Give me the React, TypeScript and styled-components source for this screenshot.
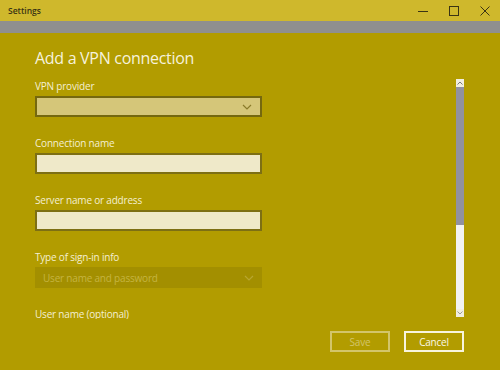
import React from 'react';
import styled, { createGlobalStyle } from 'styled-components';

const GlobalStyle = createGlobalStyle`
  html, body {
    margin: 0;
    padding: 0;
    background: #b29c00;
  }
  body {
    font-family: "Open Sans", "Noto Sans", sans-serif;
  }
`;

const fields = [
  { label: 'VPN provider', kind: 'select' },
  { label: 'Connection name', kind: 'input' },
  { label: 'Server name or address', kind: 'input' },
  { label: 'Type of sign-in info', kind: 'disabled', value: 'User name and password' },
  { label: 'User name (optional)', kind: 'input' },
];

const Chevron = ({ color }: { color: string }) => (
  <svg width="10" height="6" viewBox="0 0 10 6">
    <path d="M1 1 L5 5 L9 1" fill="none" stroke={color} strokeWidth="1.2" />
  </svg>
);

const App = () => {
  return (
    <Window>
      <GlobalStyle />
      <TitleBar>
        <TitleText>Settings</TitleText>
        <Controls>
          <ControlButton>
            <svg width="10" height="10" viewBox="0 0 10 10">
              <path d="M0 5.5 H10" stroke="#3b3414" strokeWidth="1" />
            </svg>
          </ControlButton>
          <ControlButton>
            <svg width="10" height="10" viewBox="0 0 10 10">
              <rect x="0.5" y="0.5" width="9" height="9" fill="none" stroke="#3b3414" strokeWidth="1" />
            </svg>
          </ControlButton>
          <ControlButton>
            <svg width="10" height="10" viewBox="0 0 10 10">
              <path d="M0.5 0.5 L9.5 9.5 M9.5 0.5 L0.5 9.5" stroke="#3b3414" strokeWidth="1" />
            </svg>
          </ControlButton>
        </Controls>
      </TitleBar>
      <GrayBand />

      <Main>
        <Header>
          <Heading>Add a VPN connection</Heading>
        </Header>

        <ScrollRow>
          <Form>
            {fields.map((f) => (
              <Group key={f.label}>
                <Label>{f.label}</Label>
                {f.kind === 'select' && (
                  <SelectBox>
                    <Chevron color="#8a7b2a" />
                  </SelectBox>
                )}
                {f.kind === 'input' && <TextBox />}
                {f.kind === 'disabled' && (
                  <DisabledBox>
                    <span>{f.value}</span>
                    <Chevron color="#b8a630" />
                  </DisabledBox>
                )}
              </Group>
            ))}
          </Form>
          <Scrollbar>
            <ScrollArrow>
              <svg width="6" height="4" viewBox="0 0 6 4">
                <path d="M0.5 3.5 L3 1 L5.5 3.5" fill="none" stroke="#777" strokeWidth="1" />
              </svg>
            </ScrollArrow>
            <Thumb />
            <Track />
            <ScrollArrow>
              <svg width="6" height="4" viewBox="0 0 6 4">
                <path d="M0.5 0.5 L3 3 L5.5 0.5" fill="none" stroke="#999" strokeWidth="1" />
              </svg>
            </ScrollArrow>
          </Scrollbar>
        </ScrollRow>

        <Footer>
          <Button disabled>Save</Button>
          <Button>Cancel</Button>
        </Footer>
      </Main>
    </Window>
  );
};

const Window = styled.div`
  width: 500px;
  height: 370px;
  display: flex;
  flex-direction: column;
  overflow: hidden;
  background: #b29c00;
`;

const TitleBar = styled.div`
  height: 21px;
  background: #cfb82c;
  display: flex;
  align-items: center;
  justify-content: space-between;
  padding-left: 8px;
`;

const TitleText = styled.span`
  font-size: 8.5px;
  font-weight: 600;
  color: #3a3414;
`;

const Controls = styled.div`
  display: flex;
  height: 100%;
`;

const ControlButton = styled.div`
  width: 31px;
  height: 100%;
  display: flex;
  align-items: center;
  justify-content: center;
`;

const GrayBand = styled.div`
  height: 12px;
  background: #8f8f8f;
`;

const Main = styled.div`
  flex: 1;
  display: flex;
  flex-direction: column;
  color: #f4efd2;
`;

const Header = styled.div`
  height: 46px;
  box-sizing: border-box;
  padding: 13px 0 0 35px;
`;

const Heading = styled.h1`
  margin: 0;
  font-size: 16px;
  line-height: 24px;
  font-weight: 400;
  letter-spacing: -0.3px;
  color: #f6f2dc;
`;

const ScrollRow = styled.div`
  height: 240px;
  display: flex;
`;

const Form = styled.div`
  flex: 1;
  padding-left: 35px;
  overflow: hidden;
`;

const Group = styled.div`
  width: 227px;
  margin-bottom: 19px;
`;

const Label = styled.div`
  font-size: 10px;
  line-height: 15px;
  letter-spacing: -0.2px;
  margin-bottom: 2px;
  color: #f4efd2;
  white-space: nowrap;
`;

const FieldBase = styled.div`
  height: 21px;
  box-sizing: border-box;
  display: flex;
  align-items: center;
  justify-content: space-between;
  padding: 0 8px 0 8px;
`;

const SelectBox = styled(FieldBase)`
  background: #d5c679;
  border: 2px solid #75680f;
  justify-content: flex-end;
`;

const TextBox = styled(FieldBase)`
  background: #efe9c9;
  border: 2px solid #7d6f14;
`;

const DisabledBox = styled(FieldBase)`
  background: #a38f00;
  font-size: 10px;
  letter-spacing: -0.2px;
  color: #c5b440;
`;

const Scrollbar = styled.div`
  width: 8px;
  height: 238px;
  margin-right: 36px;
  display: flex;
  flex-direction: column;
`;

const ScrollArrow = styled.div`
  height: 8px;
  background: #f1eee0;
  display: flex;
  align-items: center;
  justify-content: center;
`;

const Thumb = styled.div`
  height: 138px;
  background: #9191a0;
`;

const Track = styled.div`
  flex: 1;
  background: #f2f2f2;
`;

const Footer = styled.div`
  flex: 1;
  display: flex;
  justify-content: flex-end;
  align-items: flex-start;
  gap: 14px;
  padding: 12px 36px 0 0;
`;

const Button = styled.button`
  width: 60px;
  height: 21px;
  padding: 0;
  box-sizing: border-box;
  background: transparent;
  font-family: "Open Sans", "Noto Sans", sans-serif;
  font-size: 10px;
  letter-spacing: -0.2px;
  border: 2px solid ${(p) => (p.disabled ? '#d3c56a' : '#f8f4de')};
  color: ${(p) => (p.disabled ? '#d3c56a' : '#fbf8e8')};
`;

export default App;
